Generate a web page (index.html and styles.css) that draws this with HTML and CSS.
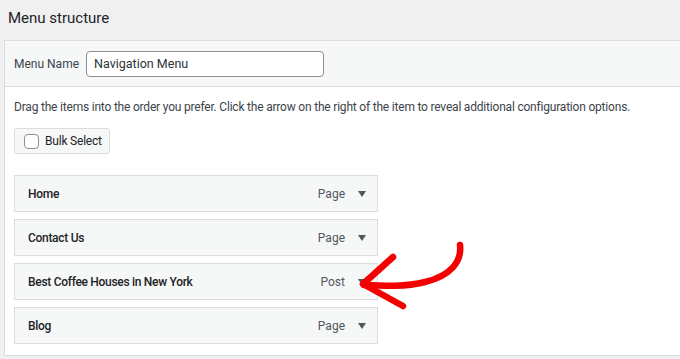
FILE: index.html
```html
<html>
<head>
    <title>Menu structure</title>
    <link rel="stylesheet" href="styles.css">
</head>
<body>
    <h2 class="title">Menu structure</h2>

    <div class="panel">
        <div class="panel-head">
            <label for="menu-name" class="name-label">Menu Name</label>
            <input type="text" id="menu-name" class="name-input" value="Navigation Menu">
        </div>

        <div class="panel-body">
            <p class="hint">Drag the items into the order you prefer. Click the arrow on the right of the item to reveal additional configuration options.</p>

            <label class="bulk">
                <span class="check"></span>
                Bulk Select
            </label>

            <ul class="items">
                <li class="item"><span class="item-title">Home</span><span class="item-type">Page</span><span class="caret"></span></li>
                <li class="item"><span class="item-title">Contact Us</span><span class="item-type">Page</span><span class="caret"></span></li>
                <li class="item"><span class="item-title">Best Coffee Houses in New York</span><span class="item-type">Post</span><span class="caret"></span></li>
                <li class="item"><span class="item-title">Blog</span><span class="item-type">Page</span><span class="caret"></span></li>
            </ul>
        </div>
    </div>

    <!-- red hand-drawn arrow pointing at the post item -->
    <svg class="pointer" width="680" height="359" viewBox="0 0 680 359">
        <g fill="none" stroke="#f40000" stroke-width="6.5" stroke-linecap="round" stroke-linejoin="round">
            <path d="M460 245 C 462 262, 450 276, 425 282 C 405 287, 385 286, 364 285"/>
            <path d="M393 257 L 363 284 L 403 306"/>
        </g>
    </svg>
</body>
</html>
```

FILE: styles.css
```css
body {
    margin: 0;
    background-color: #f0f0f1;
    font-family: Roboto, "Noto Sans", sans-serif;
    color: #1d2327;
    height: 359px;
    overflow: hidden;
    position: relative;
}

.title {
    font-size: 15px;
    font-weight: 400;
    margin: 0;
    padding: 9px 0 0 8px;
    height: 40px;
    box-sizing: border-box;
}

.panel {
    margin-left: 4px;
    border: 1px solid #dcdcde;
    border-right: none;
    background: #fff;
}

.panel-head {
    display: flex;
    align-items: center;
    gap: 7px;
    height: 45px;
    padding: 0 0 0 9px;
    background: #f6f7f7;
    border-bottom: 1px solid #dcdcde;
}

.name-label {
    font-size: 12px;
    color: #3c434a;
}

.name-input {
    width: 238px;
    height: 26px;
    box-sizing: border-box;
    border: 1px solid #8c8f94;
    border-radius: 4px;
    padding: 0 7px;
    font-family: inherit;
    font-size: 12.5px;
    color: #2c3338;
    background: #fff;
}

.panel-body {
    padding: 10px 0 11px 9px;
}

.hint {
    margin: 0;
    font-size: 12px;
    letter-spacing: -0.2px;
    color: #3c434a;
    line-height: 20px;
    white-space: nowrap;
}

.bulk {
    display: inline-flex;
    align-items: center;
    gap: 6px;
    margin-top: 11px;
    height: 26px;
    box-sizing: border-box;
    padding: 0 7px 0 9px;
    border: 1px solid #dcdcde;
    border-radius: 3px;
    background: #f6f7f7;
    font-size: 12px;
    letter-spacing: -0.2px;
    color: #1d2327;
    white-space: nowrap;
}

.check {
    flex-shrink: 0;
    width: 15px;
    height: 15px;
    box-sizing: border-box;
    border: 1px solid #8c8f94;
    border-radius: 4px;
    background: #fff;
}

.items {
    list-style: none;
    margin: 21px 0 0;
    padding: 0;
    display: flex;
    flex-direction: column;
    gap: 7px;
    width: 364px;
}

.item {
    display: flex;
    align-items: center;
    height: 37px;
    box-sizing: border-box;
    padding: 0 11px 0 13px;
    background: #f6f7f7;
    border: 1px solid #dcdcde;
    font-size: 12px;
}

.item-title {
    flex: 1;
    font-weight: 500;
    letter-spacing: -0.3px;
    color: #1d2327;
}

.item-type {
    color: #50575e;
    margin-right: 13px;
}

.caret {
    width: 0;
    height: 0;
    border-left: 4px solid transparent;
    border-right: 4px solid transparent;
    border-top: 6px solid #50575e;
}

.pointer {
    position: absolute;
    left: 0;
    top: 0;
}
```
